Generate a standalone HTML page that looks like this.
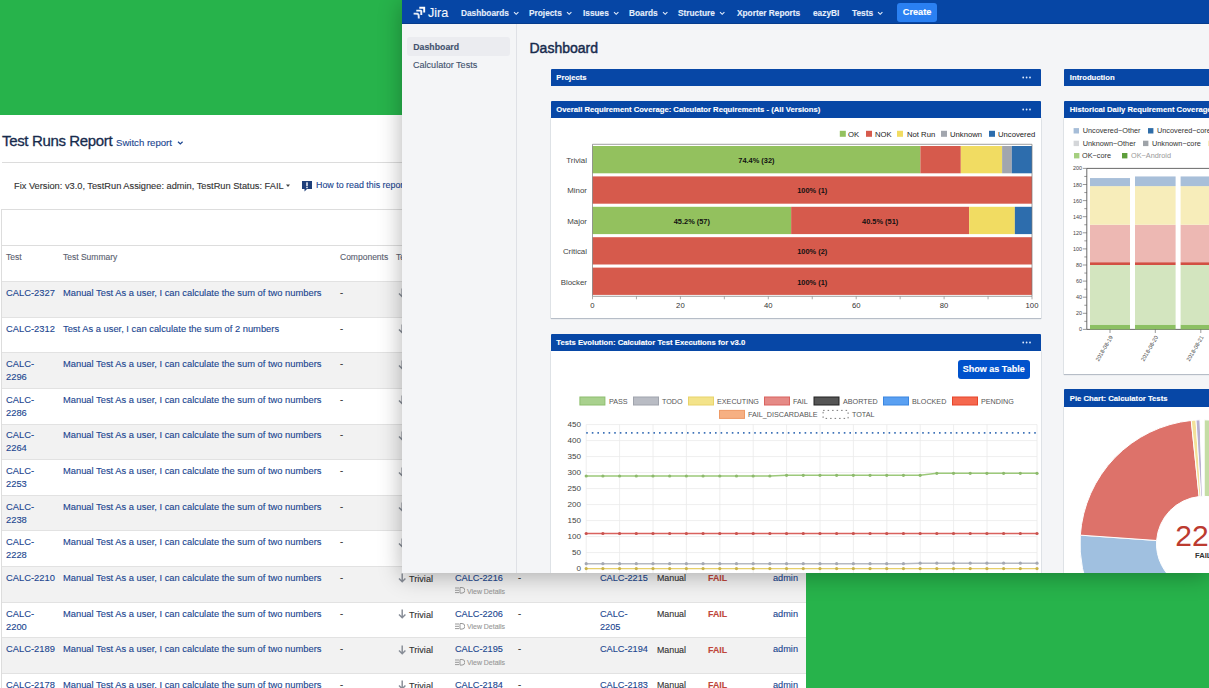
<!DOCTYPE html>
<html><head><meta charset="utf-8"><title>Jira Dashboard</title>
<style>
html,body{margin:0;padding:0;}
body{width:1209px;height:688px;overflow:hidden;position:relative;background:#27B34B;font-family:"Liberation Sans",sans-serif;}
.t{position:absolute;white-space:nowrap;line-height:1;-webkit-text-stroke:0.12px currentColor;}
.r{position:absolute;}
svg text{font-family:"Liberation Sans",sans-serif;}
</style></head><body>
<div class="r" style="left:0.00px;top:115.00px;width:806.00px;height:573.00px;background:#fff;"></div>
<div class="t" style="left:2.00px;top:132.60px;font-size:15px;color:#172B4D;-webkit-text-stroke:0.3px #172B4D;letter-spacing:-0.35px;">Test Runs Report</div>
<div class="t" style="left:116.00px;top:138.07px;font-size:9.6px;color:#1B4690;">Switch report</div>
<svg class="r" style="left:177px;top:140px" width="7" height="6"><polyline points="1,1.8 3.3,4 5.6,1.8" fill="none" stroke="#1B4690" stroke-width="1.2"/></svg>
<div class="r" style="left:2.00px;top:162.00px;width:804.00px;height:1.00px;background:#DCDCDC;"></div>
<div class="t" style="left:14.00px;top:182.17px;font-size:9.25px;color:#333;">Fix Version: v3.0, TestRun Assignee: admin, TestRun Status: FAIL</div>
<svg class="r" style="left:285px;top:184px" width="6" height="4"><polygon points="1,0.6 5,0.6 3,3" fill="#444"/></svg>
<svg class="r" style="left:301px;top:180px" width="12" height="12"><path d="M1,1 h10 v8 h-5 l-2.5,2.5 v-2.5 h-2.5 z" fill="#1F3F7A"/><rect x="5.3" y="2.3" width="1.4" height="4" fill="#fff"/><rect x="5.3" y="7" width="1.4" height="1.2" fill="#fff"/></svg>
<div class="t" style="left:316.00px;top:181.47px;font-size:8.9px;color:#1B4690;">How to read this report</div>
<div class="r" style="left:1.00px;top:209.00px;width:805.00px;height:1.00px;background:#DDDDDD;"></div>
<div class="r" style="left:1.00px;top:209.00px;width:1.00px;height:479.00px;background:#DDDDDD;"></div>
<div class="r" style="left:1.00px;top:244.80px;width:805.00px;height:1.00px;background:#DDDDDD;"></div>
<div class="t" style="left:6.00px;top:252.80px;font-size:8.5px;color:#5A6170;">Test</div>
<div class="t" style="left:63.00px;top:252.80px;font-size:8.5px;color:#5A6170;">Test Summary</div>
<div class="t" style="left:340.00px;top:252.80px;font-size:8.5px;color:#5A6170;">Components</div>
<div class="t" style="left:396.00px;top:252.80px;font-size:8.5px;color:#5A6170;">Test Type</div>
<div class="r" style="left:1.00px;top:280.50px;width:805.00px;height:1.00px;background:#DDDDDD;"></div>
<div class="r" style="left:2.00px;top:281.50px;width:804.00px;height:35.14px;background:#F2F2F2;"></div>
<div class="r" style="left:2.00px;top:281.00px;width:804.00px;height:1.00px;background:#E2E2E2;"></div>
<div class="t" style="left:6.00px;top:288.89px;font-size:9.35px;color:#1B4690;">CALC-2327</div>
<div class="t" style="left:63.00px;top:288.89px;font-size:9.35px;color:#1B4690;">Manual Test As a user, I can calculate the sum of two numbers</div>
<div class="t" style="left:340.00px;top:288.89px;font-size:9.35px;color:#333;">-</div>
<svg class="r" style="left:397.8px;top:288.30px" width="9" height="11"><path d="M4.2,0.5 V9 M1,5.6 L4.2,8.8 L7.4,5.6" fill="none" stroke="#868C96" stroke-width="1.45"/></svg>
<div class="t" style="left:409.00px;top:290.05px;font-size:9.15px;color:#333;">Trivial</div>
<div class="r" style="left:2.00px;top:317.14px;width:804.00px;height:35.14px;background:#FFFFFF;"></div>
<div class="r" style="left:2.00px;top:316.64px;width:804.00px;height:1.00px;background:#E2E2E2;"></div>
<div class="t" style="left:6.00px;top:324.53px;font-size:9.35px;color:#1B4690;">CALC-2312</div>
<div class="t" style="left:63.00px;top:324.53px;font-size:9.35px;color:#1B4690;">Test As a user, I can calculate the sum of 2 numbers</div>
<div class="t" style="left:340.00px;top:324.53px;font-size:9.35px;color:#333;">-</div>
<svg class="r" style="left:397.8px;top:323.94px" width="9" height="11"><path d="M4.2,0.5 V9 M1,5.6 L4.2,8.8 L7.4,5.6" fill="none" stroke="#868C96" stroke-width="1.45"/></svg>
<div class="t" style="left:409.00px;top:325.69px;font-size:9.15px;color:#333;">Trivial</div>
<div class="r" style="left:2.00px;top:352.78px;width:804.00px;height:35.14px;background:#F2F2F2;"></div>
<div class="r" style="left:2.00px;top:352.28px;width:804.00px;height:1.00px;background:#E2E2E2;"></div>
<div class="t" style="left:6.00px;top:360.17px;font-size:9.35px;color:#1B4690;">CALC-</div>
<div class="t" style="left:6.00px;top:373.17px;font-size:9.35px;color:#1B4690;">2296</div>
<div class="t" style="left:63.00px;top:360.17px;font-size:9.35px;color:#1B4690;">Manual Test As a user, I can calculate the sum of two numbers</div>
<div class="t" style="left:340.00px;top:360.17px;font-size:9.35px;color:#333;">-</div>
<svg class="r" style="left:397.8px;top:359.58px" width="9" height="11"><path d="M4.2,0.5 V9 M1,5.6 L4.2,8.8 L7.4,5.6" fill="none" stroke="#868C96" stroke-width="1.45"/></svg>
<div class="t" style="left:409.00px;top:361.33px;font-size:9.15px;color:#333;">Trivial</div>
<div class="r" style="left:2.00px;top:388.42px;width:804.00px;height:35.14px;background:#FFFFFF;"></div>
<div class="r" style="left:2.00px;top:387.92px;width:804.00px;height:1.00px;background:#E2E2E2;"></div>
<div class="t" style="left:6.00px;top:395.81px;font-size:9.35px;color:#1B4690;">CALC-</div>
<div class="t" style="left:6.00px;top:408.81px;font-size:9.35px;color:#1B4690;">2286</div>
<div class="t" style="left:63.00px;top:395.81px;font-size:9.35px;color:#1B4690;">Manual Test As a user, I can calculate the sum of two numbers</div>
<div class="t" style="left:340.00px;top:395.81px;font-size:9.35px;color:#333;">-</div>
<svg class="r" style="left:397.8px;top:395.22px" width="9" height="11"><path d="M4.2,0.5 V9 M1,5.6 L4.2,8.8 L7.4,5.6" fill="none" stroke="#868C96" stroke-width="1.45"/></svg>
<div class="t" style="left:409.00px;top:396.97px;font-size:9.15px;color:#333;">Trivial</div>
<div class="r" style="left:2.00px;top:424.06px;width:804.00px;height:35.14px;background:#F2F2F2;"></div>
<div class="r" style="left:2.00px;top:423.56px;width:804.00px;height:1.00px;background:#E2E2E2;"></div>
<div class="t" style="left:6.00px;top:431.45px;font-size:9.35px;color:#1B4690;">CALC-</div>
<div class="t" style="left:6.00px;top:444.45px;font-size:9.35px;color:#1B4690;">2264</div>
<div class="t" style="left:63.00px;top:431.45px;font-size:9.35px;color:#1B4690;">Manual Test As a user, I can calculate the sum of two numbers</div>
<div class="t" style="left:340.00px;top:431.45px;font-size:9.35px;color:#333;">-</div>
<svg class="r" style="left:397.8px;top:430.86px" width="9" height="11"><path d="M4.2,0.5 V9 M1,5.6 L4.2,8.8 L7.4,5.6" fill="none" stroke="#868C96" stroke-width="1.45"/></svg>
<div class="t" style="left:409.00px;top:432.61px;font-size:9.15px;color:#333;">Trivial</div>
<div class="r" style="left:2.00px;top:459.70px;width:804.00px;height:35.14px;background:#FFFFFF;"></div>
<div class="r" style="left:2.00px;top:459.20px;width:804.00px;height:1.00px;background:#E2E2E2;"></div>
<div class="t" style="left:6.00px;top:467.09px;font-size:9.35px;color:#1B4690;">CALC-</div>
<div class="t" style="left:6.00px;top:480.09px;font-size:9.35px;color:#1B4690;">2253</div>
<div class="t" style="left:63.00px;top:467.09px;font-size:9.35px;color:#1B4690;">Manual Test As a user, I can calculate the sum of two numbers</div>
<div class="t" style="left:340.00px;top:467.09px;font-size:9.35px;color:#333;">-</div>
<svg class="r" style="left:397.8px;top:466.50px" width="9" height="11"><path d="M4.2,0.5 V9 M1,5.6 L4.2,8.8 L7.4,5.6" fill="none" stroke="#868C96" stroke-width="1.45"/></svg>
<div class="t" style="left:409.00px;top:468.25px;font-size:9.15px;color:#333;">Trivial</div>
<div class="r" style="left:2.00px;top:495.34px;width:804.00px;height:35.14px;background:#F2F2F2;"></div>
<div class="r" style="left:2.00px;top:494.84px;width:804.00px;height:1.00px;background:#E2E2E2;"></div>
<div class="t" style="left:6.00px;top:502.73px;font-size:9.35px;color:#1B4690;">CALC-</div>
<div class="t" style="left:6.00px;top:515.73px;font-size:9.35px;color:#1B4690;">2238</div>
<div class="t" style="left:63.00px;top:502.73px;font-size:9.35px;color:#1B4690;">Manual Test As a user, I can calculate the sum of two numbers</div>
<div class="t" style="left:340.00px;top:502.73px;font-size:9.35px;color:#333;">-</div>
<svg class="r" style="left:397.8px;top:502.14px" width="9" height="11"><path d="M4.2,0.5 V9 M1,5.6 L4.2,8.8 L7.4,5.6" fill="none" stroke="#868C96" stroke-width="1.45"/></svg>
<div class="t" style="left:409.00px;top:503.89px;font-size:9.15px;color:#333;">Trivial</div>
<div class="r" style="left:2.00px;top:530.98px;width:804.00px;height:35.14px;background:#FFFFFF;"></div>
<div class="r" style="left:2.00px;top:530.48px;width:804.00px;height:1.00px;background:#E2E2E2;"></div>
<div class="t" style="left:6.00px;top:538.37px;font-size:9.35px;color:#1B4690;">CALC-</div>
<div class="t" style="left:6.00px;top:551.37px;font-size:9.35px;color:#1B4690;">2228</div>
<div class="t" style="left:63.00px;top:538.37px;font-size:9.35px;color:#1B4690;">Manual Test As a user, I can calculate the sum of two numbers</div>
<div class="t" style="left:340.00px;top:538.37px;font-size:9.35px;color:#333;">-</div>
<svg class="r" style="left:397.8px;top:537.78px" width="9" height="11"><path d="M4.2,0.5 V9 M1,5.6 L4.2,8.8 L7.4,5.6" fill="none" stroke="#868C96" stroke-width="1.45"/></svg>
<div class="t" style="left:409.00px;top:539.53px;font-size:9.15px;color:#333;">Trivial</div>
<div class="r" style="left:2.00px;top:566.62px;width:804.00px;height:35.14px;background:#F2F2F2;"></div>
<div class="r" style="left:2.00px;top:566.12px;width:804.00px;height:1.00px;background:#E2E2E2;"></div>
<div class="t" style="left:6.00px;top:574.01px;font-size:9.35px;color:#1B4690;">CALC-2210</div>
<div class="t" style="left:63.00px;top:574.01px;font-size:9.35px;color:#1B4690;">Manual Test As a user, I can calculate the sum of two numbers</div>
<div class="t" style="left:340.00px;top:574.01px;font-size:9.35px;color:#333;">-</div>
<svg class="r" style="left:397.8px;top:573.42px" width="9" height="11"><path d="M4.2,0.5 V9 M1,5.6 L4.2,8.8 L7.4,5.6" fill="none" stroke="#868C96" stroke-width="1.45"/></svg>
<div class="t" style="left:409.00px;top:575.17px;font-size:9.15px;color:#333;">Trivial</div>
<div class="t" style="left:455.00px;top:574.14px;font-size:9.19px;color:#1B4690;">CALC-2216</div>
<svg class="r" style="left:455px;top:587.42px" width="10" height="8"><g fill="#999"><rect x="0" y="0.5" width="4" height="1"/><rect x="0" y="2.8" width="4" height="1"/><rect x="0" y="5.1" width="4" height="1"/><path d="M5,0.5 h2 a2.6,2.6 0 0 1 0,5.6 h-2 z" fill="none" stroke="#999" stroke-width="1"/></g></svg>
<div class="t" style="left:467.00px;top:588.74px;font-size:6.95px;color:#999;">View Details</div>
<div class="t" style="left:518.00px;top:574.01px;font-size:9.35px;color:#333;">-</div>
<div class="t" style="left:600.00px;top:574.14px;font-size:9.19px;color:#1B4690;">CALC-2215</div>
<div class="t" style="left:657.00px;top:574.43px;font-size:8.85px;color:#333;">Manual</div>
<div class="t" style="left:708.00px;top:574.47px;font-size:8.8px;color:#BF463B;font-weight:bold;">FAIL</div>
<div class="t" style="left:773.00px;top:574.15px;font-size:9.18px;color:#1B4690;">admin</div>
<div class="r" style="left:2.00px;top:602.26px;width:804.00px;height:35.14px;background:#FFFFFF;"></div>
<div class="r" style="left:2.00px;top:601.76px;width:804.00px;height:1.00px;background:#E2E2E2;"></div>
<div class="t" style="left:6.00px;top:609.65px;font-size:9.35px;color:#1B4690;">CALC-</div>
<div class="t" style="left:6.00px;top:622.65px;font-size:9.35px;color:#1B4690;">2200</div>
<div class="t" style="left:63.00px;top:609.65px;font-size:9.35px;color:#1B4690;">Manual Test As a user, I can calculate the sum of two numbers</div>
<div class="t" style="left:340.00px;top:609.65px;font-size:9.35px;color:#333;">-</div>
<svg class="r" style="left:397.8px;top:609.06px" width="9" height="11"><path d="M4.2,0.5 V9 M1,5.6 L4.2,8.8 L7.4,5.6" fill="none" stroke="#868C96" stroke-width="1.45"/></svg>
<div class="t" style="left:409.00px;top:610.81px;font-size:9.15px;color:#333;">Trivial</div>
<div class="t" style="left:455.00px;top:609.78px;font-size:9.19px;color:#1B4690;">CALC-2206</div>
<svg class="r" style="left:455px;top:623.06px" width="10" height="8"><g fill="#999"><rect x="0" y="0.5" width="4" height="1"/><rect x="0" y="2.8" width="4" height="1"/><rect x="0" y="5.1" width="4" height="1"/><path d="M5,0.5 h2 a2.6,2.6 0 0 1 0,5.6 h-2 z" fill="none" stroke="#999" stroke-width="1"/></g></svg>
<div class="t" style="left:467.00px;top:624.38px;font-size:6.95px;color:#999;">View Details</div>
<div class="t" style="left:518.00px;top:609.65px;font-size:9.35px;color:#333;">-</div>
<div class="t" style="left:600.00px;top:609.78px;font-size:9.19px;color:#1B4690;">CALC-</div>
<div class="t" style="left:600.00px;top:622.78px;font-size:9.19px;color:#1B4690;">2205</div>
<div class="t" style="left:657.00px;top:610.07px;font-size:8.85px;color:#333;">Manual</div>
<div class="t" style="left:708.00px;top:610.11px;font-size:8.8px;color:#BF463B;font-weight:bold;">FAIL</div>
<div class="t" style="left:773.00px;top:609.79px;font-size:9.18px;color:#1B4690;">admin</div>
<div class="r" style="left:2.00px;top:637.90px;width:804.00px;height:35.14px;background:#F2F2F2;"></div>
<div class="r" style="left:2.00px;top:637.40px;width:804.00px;height:1.00px;background:#E2E2E2;"></div>
<div class="t" style="left:6.00px;top:645.29px;font-size:9.35px;color:#1B4690;">CALC-2189</div>
<div class="t" style="left:63.00px;top:645.29px;font-size:9.35px;color:#1B4690;">Manual Test As a user, I can calculate the sum of two numbers</div>
<div class="t" style="left:340.00px;top:645.29px;font-size:9.35px;color:#333;">-</div>
<svg class="r" style="left:397.8px;top:644.70px" width="9" height="11"><path d="M4.2,0.5 V9 M1,5.6 L4.2,8.8 L7.4,5.6" fill="none" stroke="#868C96" stroke-width="1.45"/></svg>
<div class="t" style="left:409.00px;top:646.45px;font-size:9.15px;color:#333;">Trivial</div>
<div class="t" style="left:455.00px;top:645.42px;font-size:9.19px;color:#1B4690;">CALC-2195</div>
<svg class="r" style="left:455px;top:658.70px" width="10" height="8"><g fill="#999"><rect x="0" y="0.5" width="4" height="1"/><rect x="0" y="2.8" width="4" height="1"/><rect x="0" y="5.1" width="4" height="1"/><path d="M5,0.5 h2 a2.6,2.6 0 0 1 0,5.6 h-2 z" fill="none" stroke="#999" stroke-width="1"/></g></svg>
<div class="t" style="left:467.00px;top:660.02px;font-size:6.95px;color:#999;">View Details</div>
<div class="t" style="left:518.00px;top:645.29px;font-size:9.35px;color:#333;">-</div>
<div class="t" style="left:600.00px;top:645.42px;font-size:9.19px;color:#1B4690;">CALC-2194</div>
<div class="t" style="left:657.00px;top:645.71px;font-size:8.85px;color:#333;">Manual</div>
<div class="t" style="left:708.00px;top:645.75px;font-size:8.8px;color:#BF463B;font-weight:bold;">FAIL</div>
<div class="t" style="left:773.00px;top:645.43px;font-size:9.18px;color:#1B4690;">admin</div>
<div class="r" style="left:2.00px;top:673.54px;width:804.00px;height:35.14px;background:#FFFFFF;"></div>
<div class="r" style="left:2.00px;top:673.04px;width:804.00px;height:1.00px;background:#E2E2E2;"></div>
<div class="t" style="left:6.00px;top:680.93px;font-size:9.35px;color:#1B4690;">CALC-2178</div>
<div class="t" style="left:63.00px;top:680.93px;font-size:9.35px;color:#1B4690;">Manual Test As a user, I can calculate the sum of two numbers</div>
<div class="t" style="left:340.00px;top:680.93px;font-size:9.35px;color:#333;">-</div>
<svg class="r" style="left:397.8px;top:680.34px" width="9" height="11"><path d="M4.2,0.5 V9 M1,5.6 L4.2,8.8 L7.4,5.6" fill="none" stroke="#868C96" stroke-width="1.45"/></svg>
<div class="t" style="left:409.00px;top:682.09px;font-size:9.15px;color:#333;">Trivial</div>
<div class="t" style="left:455.00px;top:681.06px;font-size:9.19px;color:#1B4690;">CALC-2184</div>
<svg class="r" style="left:455px;top:694.34px" width="10" height="8"><g fill="#999"><rect x="0" y="0.5" width="4" height="1"/><rect x="0" y="2.8" width="4" height="1"/><rect x="0" y="5.1" width="4" height="1"/><path d="M5,0.5 h2 a2.6,2.6 0 0 1 0,5.6 h-2 z" fill="none" stroke="#999" stroke-width="1"/></g></svg>
<div class="t" style="left:467.00px;top:695.66px;font-size:6.95px;color:#999;">View Details</div>
<div class="t" style="left:518.00px;top:680.93px;font-size:9.35px;color:#333;">-</div>
<div class="t" style="left:600.00px;top:681.06px;font-size:9.19px;color:#1B4690;">CALC-2183</div>
<div class="t" style="left:657.00px;top:681.35px;font-size:8.85px;color:#333;">Manual</div>
<div class="t" style="left:708.00px;top:681.39px;font-size:8.8px;color:#BF463B;font-weight:bold;">FAIL</div>
<div class="t" style="left:773.00px;top:681.07px;font-size:9.18px;color:#1B4690;">admin</div>
<div class="r" style="left:806px;top:573px;width:403px;height:115px;background:#27B34B"></div>
<div class="r" style="left:402px;top:0;width:807px;height:573px;background:#F4F5F7;box-shadow:0 3px 22px rgba(0,0,0,0.3);overflow:hidden"><div class="r" style="left:-402px;top:0;width:1209px;height:573px;">
<div class="r" style="left:402.00px;top:0.00px;width:807.00px;height:24.40px;background:#0646A5;box-shadow:inset 0 -1px 0 #053B8C;"></div>
<svg class="r" style="left:408px;top:2px" width="20" height="20" viewBox="0 0 20 20"><g fill="none" stroke="#fff" stroke-width="1.9" stroke-linecap="butt" stroke-linejoin="miter"><path d="M11.3,5.7 H16.2 V10.6"/><path d="M8.3,8.6 H12.7 L13.3,9.2 V12.9" opacity="0.95"/><path d="M5.6,11.6 L9.6,11.8 L10.6,12.8 L10.8,16.5" opacity="0.9"/></g></svg>
<div class="t" style="left:428.00px;top:7.13px;font-size:12.6px;color:#F4F7FD;">Jira</div>
<div class="t" style="left:461.00px;top:8.67px;font-size:8.3px;color:#E4EDFB;font-weight:bold;">Dashboards</div>
<svg class="r" style="left:513.26px;top:10.6px" width="7" height="5"><polyline points="1,1.2 3.2,3.3 5.4,1.2" fill="none" stroke="#E4EDFB" stroke-width="1.15"/></svg>
<div class="t" style="left:529.00px;top:8.67px;font-size:8.3px;color:#E4EDFB;font-weight:bold;">Projects</div>
<svg class="r" style="left:566.05px;top:10.6px" width="7" height="5"><polyline points="1,1.2 3.2,3.3 5.4,1.2" fill="none" stroke="#E4EDFB" stroke-width="1.15"/></svg>
<div class="t" style="left:583.00px;top:8.67px;font-size:8.3px;color:#E4EDFB;font-weight:bold;">Issues</div>
<svg class="r" style="left:613.14px;top:10.6px" width="7" height="5"><polyline points="1,1.2 3.2,3.3 5.4,1.2" fill="none" stroke="#E4EDFB" stroke-width="1.15"/></svg>
<div class="t" style="left:629.00px;top:8.67px;font-size:8.3px;color:#E4EDFB;font-weight:bold;">Boards</div>
<svg class="r" style="left:661.89px;top:10.6px" width="7" height="5"><polyline points="1,1.2 3.2,3.3 5.4,1.2" fill="none" stroke="#E4EDFB" stroke-width="1.15"/></svg>
<div class="t" style="left:678.00px;top:8.67px;font-size:8.3px;color:#E4EDFB;font-weight:bold;">Structure</div>
<svg class="r" style="left:719.19px;top:10.6px" width="7" height="5"><polyline points="1,1.2 3.2,3.3 5.4,1.2" fill="none" stroke="#E4EDFB" stroke-width="1.15"/></svg>
<div class="t" style="left:737.00px;top:8.67px;font-size:8.3px;color:#E4EDFB;font-weight:bold;">Xporter Reports</div>
<div class="t" style="left:813.00px;top:8.67px;font-size:8.3px;color:#E4EDFB;font-weight:bold;">eazyBI</div>
<div class="t" style="left:852.00px;top:8.67px;font-size:8.3px;color:#E4EDFB;font-weight:bold;">Tests</div>
<svg class="r" style="left:877.36px;top:10.6px" width="7" height="5"><polyline points="1,1.2 3.2,3.3 5.4,1.2" fill="none" stroke="#E4EDFB" stroke-width="1.15"/></svg>
<div class="r" style="left:897.00px;top:3.00px;width:40.20px;height:18.60px;background:#2A80F2;border-radius:3px;"></div>
<div class="t" style="left:917.10px;top:7.91px;font-size:9.2px;color:#fff;font-weight:bold;transform:translateX(-50%);">Create</div>
<div class="r" style="left:516.00px;top:24.00px;width:1.00px;height:549.00px;background:#DFE1E6;"></div>
<div class="r" style="left:407.00px;top:37.00px;width:103.00px;height:18.50px;background:#EBECF0;border-radius:3px;"></div>
<div class="t" style="left:413.30px;top:42.99px;font-size:8.75px;color:#42526E;font-weight:bold;">Dashboard</div>
<div class="t" style="left:413.00px;top:61.14px;font-size:9.05px;color:#42526E;">Calculator Tests</div>
<div class="t" style="left:529.50px;top:40.75px;font-size:14px;color:#172B4D;-webkit-text-stroke:0.45px #172B4D;">Dashboard</div>
<div class="r" style="left:550.50px;top:68.60px;width:490.50px;height:17.40px;background:#0747A6;border-radius:1px 1px 0 0;"></div>
<div class="t" style="left:556.30px;top:73.98px;font-size:7.7px;color:#fff;font-weight:bold;">Projects</div>
<svg class="r" style="left:1022.00px;top:75.60px" width="10" height="3"><g fill="#DEEBFF"><circle cx="1.2" cy="1.5" r="0.9"/><circle cx="4.6" cy="1.5" r="0.9"/><circle cx="8" cy="1.5" r="0.9"/></g></svg>
<div class="r" style="left:550.50px;top:117.70px;width:490.50px;height:200.80px;background:#fff;box-shadow:0 1px 1px rgba(9,30,66,0.22), 0 0 0 1px rgba(9,30,66,0.05);"></div>
<div class="r" style="left:550.50px;top:101.00px;width:490.50px;height:16.70px;background:#0747A6;border-radius:1px 1px 0 0;"></div>
<div class="t" style="left:556.30px;top:106.38px;font-size:7.7px;color:#fff;font-weight:bold;">Overall Requirement Coverage: Calculator Requirements - (All Versions)</div>
<svg class="r" style="left:1022.00px;top:108.00px" width="10" height="3"><g fill="#DEEBFF"><circle cx="1.2" cy="1.5" r="0.9"/><circle cx="4.6" cy="1.5" r="0.9"/><circle cx="8" cy="1.5" r="0.9"/></g></svg>
<div class="r" style="left:550.50px;top:350.80px;width:490.50px;height:249.20px;background:#fff;box-shadow:0 1px 1px rgba(9,30,66,0.22), 0 0 0 1px rgba(9,30,66,0.05);"></div>
<div class="r" style="left:550.50px;top:334.00px;width:490.50px;height:16.80px;background:#0747A6;border-radius:1px 1px 0 0;"></div>
<div class="t" style="left:556.30px;top:339.38px;font-size:7.7px;color:#fff;font-weight:bold;">Tests Evolution: Calculator Test Executions for v3.0</div>
<svg class="r" style="left:1022.00px;top:341.00px" width="10" height="3"><g fill="#DEEBFF"><circle cx="1.2" cy="1.5" r="0.9"/><circle cx="4.6" cy="1.5" r="0.9"/><circle cx="8" cy="1.5" r="0.9"/></g></svg>
<div class="r" style="left:957.50px;top:360.40px;width:72.50px;height:18.30px;background:#0052CC;border-radius:3px;"></div>
<div class="t" style="left:993.75px;top:365.38px;font-size:9.0px;color:#fff;font-weight:bold;transform:translateX(-50%);">Show as Table</div>
<div class="r" style="left:1064.00px;top:68.60px;width:166.00px;height:17.40px;background:#0747A6;border-radius:1px 1px 0 0;"></div>
<div class="t" style="left:1069.80px;top:73.98px;font-size:7.7px;color:#fff;font-weight:bold;">Introduction</div>
<div class="r" style="left:1064.00px;top:117.70px;width:166.00px;height:256.60px;background:#fff;box-shadow:0 1px 1px rgba(9,30,66,0.22), 0 0 0 1px rgba(9,30,66,0.05);"></div>
<div class="r" style="left:1064.00px;top:100.70px;width:166.00px;height:17.00px;background:#0747A6;border-radius:1px 1px 0 0;"></div>
<div class="t" style="left:1069.80px;top:106.08px;font-size:7.7px;color:#fff;font-weight:bold;">Historical Daily Requirement Coverage</div>
<div class="r" style="left:1064.00px;top:406.60px;width:166.00px;height:193.40px;background:#fff;box-shadow:0 1px 1px rgba(9,30,66,0.22), 0 0 0 1px rgba(9,30,66,0.05);"></div>
<div class="r" style="left:1064.00px;top:389.20px;width:166.00px;height:17.40px;background:#0747A6;border-radius:1px 1px 0 0;"></div>
<div class="t" style="left:1069.80px;top:394.58px;font-size:7.7px;color:#fff;font-weight:bold;">Pie Chart: Calculator Tests</div>
<svg class="r" style="left:0;top:0" width="1209" height="573"><rect x="839.8" y="130.8" width="6" height="6" fill="#93C15E"/><text x="848" y="136.5" font-size="7.7" fill="#222">OK</text><rect x="866" y="130.8" width="6" height="6" fill="#D65A4C"/><text x="875" y="136.5" font-size="7.7" fill="#222">NOK</text><rect x="897" y="130.8" width="6" height="6" fill="#F1DC62"/><text x="907" y="136.5" font-size="7.7" fill="#222">Not Run</text><rect x="941" y="130.8" width="6" height="6" fill="#A2A6AE"/><text x="950" y="136.5" font-size="7.7" fill="#222">Unknown</text><rect x="989" y="130.8" width="6" height="6" fill="#2D6DAD"/><text x="998" y="136.5" font-size="7.7" fill="#222">Uncovered</text><rect x="592.50" y="146.00" width="327.87" height="27.30" fill="#93C15E"/><text x="756.43" y="163.05" font-size="7.4" font-weight="bold" fill="#111" text-anchor="middle">74.4% (32)</text><rect x="920.37" y="146.00" width="40.43" height="27.30" fill="#D65A4C"/><rect x="960.80" y="146.00" width="41.31" height="27.30" fill="#F1DC62"/><rect x="1002.11" y="146.00" width="9.67" height="27.30" fill="#A2A6AE"/><rect x="1011.78" y="146.00" width="20.22" height="27.30" fill="#2D6DAD"/><text x="587" y="163.05" font-size="7.9" fill="#444" text-anchor="end">Trivial</text><rect x="592.50" y="176.40" width="439.50" height="27.30" fill="#D65A4C"/><text x="812.25" y="193.45" font-size="7.4" font-weight="bold" fill="#111" text-anchor="middle">100% (1)</text><text x="587" y="193.45" font-size="7.9" fill="#444" text-anchor="end">Minor</text><rect x="592.50" y="206.80" width="198.65" height="27.30" fill="#93C15E"/><text x="691.83" y="223.85" font-size="7.4" font-weight="bold" fill="#111" text-anchor="middle">45.2% (57)</text><rect x="791.15" y="206.80" width="178.00" height="27.30" fill="#D65A4C"/><text x="880.15" y="223.85" font-size="7.4" font-weight="bold" fill="#111" text-anchor="middle">40.5% (51)</text><rect x="969.15" y="206.80" width="45.71" height="27.30" fill="#F1DC62"/><rect x="1014.86" y="206.80" width="17.14" height="27.30" fill="#2D6DAD"/><text x="587" y="223.85" font-size="7.9" fill="#444" text-anchor="end">Major</text><rect x="592.50" y="237.20" width="439.50" height="27.30" fill="#D65A4C"/><text x="812.25" y="254.25" font-size="7.4" font-weight="bold" fill="#111" text-anchor="middle">100% (2)</text><text x="587" y="254.25" font-size="7.9" fill="#444" text-anchor="end">Critical</text><rect x="592.50" y="267.60" width="439.50" height="27.30" fill="#D65A4C"/><text x="812.25" y="284.65" font-size="7.4" font-weight="bold" fill="#111" text-anchor="middle">100% (1)</text><text x="587" y="284.65" font-size="7.9" fill="#444" text-anchor="end">Blocker</text><path d="M592.5,144.3 H1032 V296.3 H592.5 Z" fill="none" stroke="#777" stroke-width="0.7"/><line x1="592.50" y1="296.3" x2="592.50" y2="299.3" stroke="#888" stroke-width="0.7"/><text x="592.50" y="307.6" font-size="7.7" fill="#333" text-anchor="middle">0</text><line x1="636.45" y1="296.3" x2="636.45" y2="299.3" stroke="#888" stroke-width="0.7"/><line x1="680.40" y1="296.3" x2="680.40" y2="299.3" stroke="#888" stroke-width="0.7"/><text x="680.40" y="307.6" font-size="7.7" fill="#333" text-anchor="middle">20</text><line x1="724.35" y1="296.3" x2="724.35" y2="299.3" stroke="#888" stroke-width="0.7"/><line x1="768.30" y1="296.3" x2="768.30" y2="299.3" stroke="#888" stroke-width="0.7"/><text x="768.30" y="307.6" font-size="7.7" fill="#333" text-anchor="middle">40</text><line x1="812.25" y1="296.3" x2="812.25" y2="299.3" stroke="#888" stroke-width="0.7"/><line x1="856.20" y1="296.3" x2="856.20" y2="299.3" stroke="#888" stroke-width="0.7"/><text x="856.20" y="307.6" font-size="7.7" fill="#333" text-anchor="middle">60</text><line x1="900.15" y1="296.3" x2="900.15" y2="299.3" stroke="#888" stroke-width="0.7"/><line x1="944.10" y1="296.3" x2="944.10" y2="299.3" stroke="#888" stroke-width="0.7"/><text x="944.10" y="307.6" font-size="7.7" fill="#333" text-anchor="middle">80</text><line x1="988.05" y1="296.3" x2="988.05" y2="299.3" stroke="#888" stroke-width="0.7"/><line x1="1032.00" y1="296.3" x2="1032.00" y2="299.3" stroke="#888" stroke-width="0.7"/><text x="1032.00" y="307.6" font-size="7.7" fill="#333" text-anchor="middle">100</text><rect x="579.9" y="397" width="25" height="8" fill="#A9D18E" stroke="#8DBE6E" stroke-width="1"/><text x="609" y="403.6" font-size="7.2" fill="#555">PASS</text><rect x="633.5" y="397" width="25" height="8" fill="#B9BCC4" stroke="#A0A4AD" stroke-width="1"/><text x="662" y="403.6" font-size="7.2" fill="#555">TODO</text><rect x="688.5" y="397" width="25" height="8" fill="#F3E38A" stroke="#E8D36A" stroke-width="1"/><text x="717" y="403.6" font-size="7.2" fill="#555">EXECUTING</text><rect x="764.5" y="397" width="25" height="8" fill="#E58A86" stroke="#D9625E" stroke-width="1"/><text x="793" y="403.6" font-size="7.2" fill="#555">FAIL</text><rect x="814.0" y="397" width="25" height="8" fill="#555" stroke="#222" stroke-width="1"/><text x="843" y="403.6" font-size="7.2" fill="#555">ABORTED</text><rect x="883.5" y="397" width="25" height="8" fill="#5AA0F2" stroke="#3B86E0" stroke-width="1"/><text x="912" y="403.6" font-size="7.2" fill="#555">BLOCKED</text><rect x="952.5" y="397" width="25" height="8" fill="#F5684E" stroke="#E6452A" stroke-width="1"/><text x="981" y="403.6" font-size="7.2" fill="#555">PENDING</text><rect x="719.5" y="410.4" width="25" height="8" fill="#F6B083" stroke="#EE9A66" stroke-width="1"/><text x="748" y="417.0" font-size="7.2" fill="#555">FAIL_DISCARDABLE</text><rect x="823.1" y="410.4" width="25" height="8" fill="none" stroke="#777" stroke-width="1" stroke-dasharray="1.5,3"/><text x="852" y="417" font-size="7.2" fill="#555">TOTAL</text><line x1="586.2" y1="568.60" x2="1037" y2="568.60" stroke="#EAEAEA" stroke-width="0.8"/><text x="581" y="571.40" font-size="8.1" fill="#444" text-anchor="end">0</text><line x1="586.2" y1="552.60" x2="1037" y2="552.60" stroke="#EAEAEA" stroke-width="0.8"/><text x="581" y="555.40" font-size="8.1" fill="#444" text-anchor="end">50</text><line x1="586.2" y1="536.60" x2="1037" y2="536.60" stroke="#EAEAEA" stroke-width="0.8"/><text x="581" y="539.40" font-size="8.1" fill="#444" text-anchor="end">100</text><line x1="586.2" y1="520.60" x2="1037" y2="520.60" stroke="#EAEAEA" stroke-width="0.8"/><text x="581" y="523.40" font-size="8.1" fill="#444" text-anchor="end">150</text><line x1="586.2" y1="504.60" x2="1037" y2="504.60" stroke="#EAEAEA" stroke-width="0.8"/><text x="581" y="507.40" font-size="8.1" fill="#444" text-anchor="end">200</text><line x1="586.2" y1="488.60" x2="1037" y2="488.60" stroke="#EAEAEA" stroke-width="0.8"/><text x="581" y="491.40" font-size="8.1" fill="#444" text-anchor="end">250</text><line x1="586.2" y1="472.60" x2="1037" y2="472.60" stroke="#EAEAEA" stroke-width="0.8"/><text x="581" y="475.40" font-size="8.1" fill="#444" text-anchor="end">300</text><line x1="586.2" y1="456.60" x2="1037" y2="456.60" stroke="#EAEAEA" stroke-width="0.8"/><text x="581" y="459.40" font-size="8.1" fill="#444" text-anchor="end">350</text><line x1="586.2" y1="440.60" x2="1037" y2="440.60" stroke="#EAEAEA" stroke-width="0.8"/><text x="581" y="443.40" font-size="8.1" fill="#444" text-anchor="end">400</text><line x1="586.2" y1="424.60" x2="1037" y2="424.60" stroke="#EAEAEA" stroke-width="0.8"/><text x="581" y="427.40" font-size="8.1" fill="#444" text-anchor="end">450</text><line x1="586.20" y1="424.6" x2="586.20" y2="573" stroke="#EAEAEA" stroke-width="0.8"/><line x1="619.60" y1="424.6" x2="619.60" y2="573" stroke="#EAEAEA" stroke-width="0.8"/><line x1="653.00" y1="424.6" x2="653.00" y2="573" stroke="#EAEAEA" stroke-width="0.8"/><line x1="686.40" y1="424.6" x2="686.40" y2="573" stroke="#EAEAEA" stroke-width="0.8"/><line x1="719.80" y1="424.6" x2="719.80" y2="573" stroke="#EAEAEA" stroke-width="0.8"/><line x1="753.20" y1="424.6" x2="753.20" y2="573" stroke="#EAEAEA" stroke-width="0.8"/><line x1="786.60" y1="424.6" x2="786.60" y2="573" stroke="#EAEAEA" stroke-width="0.8"/><line x1="820.00" y1="424.6" x2="820.00" y2="573" stroke="#EAEAEA" stroke-width="0.8"/><line x1="853.40" y1="424.6" x2="853.40" y2="573" stroke="#EAEAEA" stroke-width="0.8"/><line x1="886.80" y1="424.6" x2="886.80" y2="573" stroke="#EAEAEA" stroke-width="0.8"/><line x1="920.20" y1="424.6" x2="920.20" y2="573" stroke="#EAEAEA" stroke-width="0.8"/><line x1="953.60" y1="424.6" x2="953.60" y2="573" stroke="#EAEAEA" stroke-width="0.8"/><line x1="987.00" y1="424.6" x2="987.00" y2="573" stroke="#EAEAEA" stroke-width="0.8"/><line x1="1037" y1="424.6" x2="1037" y2="573" stroke="#EAEAEA" stroke-width="0.8"/><polyline points="586.20,476.00 602.90,476.00 619.59,476.00 636.29,476.00 652.99,476.00 669.68,476.00 686.38,476.00 703.07,476.00 719.77,476.00 736.47,476.00 753.16,476.00 769.86,476.00 786.56,475.30 803.25,475.30 819.95,475.30 836.64,475.30 853.34,475.30 870.04,475.30 886.73,475.30 903.43,475.30 920.13,475.30 936.82,473.30 953.52,473.30 970.21,473.30 986.91,473.30 1003.61,473.30 1020.30,473.30 1037.00,473.30" fill="none" stroke="#9CC97A" stroke-width="1.4"/><circle cx="586.20" cy="476.00" r="1.6" fill="#8DBA6C"/><circle cx="602.90" cy="476.00" r="1.6" fill="#8DBA6C"/><circle cx="619.59" cy="476.00" r="1.6" fill="#8DBA6C"/><circle cx="636.29" cy="476.00" r="1.6" fill="#8DBA6C"/><circle cx="652.99" cy="476.00" r="1.6" fill="#8DBA6C"/><circle cx="669.68" cy="476.00" r="1.6" fill="#8DBA6C"/><circle cx="686.38" cy="476.00" r="1.6" fill="#8DBA6C"/><circle cx="703.07" cy="476.00" r="1.6" fill="#8DBA6C"/><circle cx="719.77" cy="476.00" r="1.6" fill="#8DBA6C"/><circle cx="736.47" cy="476.00" r="1.6" fill="#8DBA6C"/><circle cx="753.16" cy="476.00" r="1.6" fill="#8DBA6C"/><circle cx="769.86" cy="476.00" r="1.6" fill="#8DBA6C"/><circle cx="786.56" cy="475.30" r="1.6" fill="#8DBA6C"/><circle cx="803.25" cy="475.30" r="1.6" fill="#8DBA6C"/><circle cx="819.95" cy="475.30" r="1.6" fill="#8DBA6C"/><circle cx="836.64" cy="475.30" r="1.6" fill="#8DBA6C"/><circle cx="853.34" cy="475.30" r="1.6" fill="#8DBA6C"/><circle cx="870.04" cy="475.30" r="1.6" fill="#8DBA6C"/><circle cx="886.73" cy="475.30" r="1.6" fill="#8DBA6C"/><circle cx="903.43" cy="475.30" r="1.6" fill="#8DBA6C"/><circle cx="920.13" cy="475.30" r="1.6" fill="#8DBA6C"/><circle cx="936.82" cy="473.30" r="1.6" fill="#8DBA6C"/><circle cx="953.52" cy="473.30" r="1.6" fill="#8DBA6C"/><circle cx="970.21" cy="473.30" r="1.6" fill="#8DBA6C"/><circle cx="986.91" cy="473.30" r="1.6" fill="#8DBA6C"/><circle cx="1003.61" cy="473.30" r="1.6" fill="#8DBA6C"/><circle cx="1020.30" cy="473.30" r="1.6" fill="#8DBA6C"/><circle cx="1037.00" cy="473.30" r="1.6" fill="#8DBA6C"/><polyline points="586.20,533.50 602.90,533.50 619.59,533.50 636.29,533.50 652.99,533.50 669.68,533.50 686.38,533.50 703.07,533.50 719.77,533.50 736.47,533.50 753.16,533.50 769.86,533.50 786.56,533.50 803.25,533.50 819.95,533.50 836.64,533.50 853.34,533.50 870.04,533.50 886.73,533.50 903.43,533.50 920.13,533.50 936.82,533.50 953.52,533.50 970.21,533.50 986.91,533.50 1003.61,533.50 1020.30,533.50 1037.00,533.50" fill="none" stroke="#D9625E" stroke-width="1.4"/><circle cx="586.20" cy="533.50" r="1.6" fill="#C9524E"/><circle cx="602.90" cy="533.50" r="1.6" fill="#C9524E"/><circle cx="619.59" cy="533.50" r="1.6" fill="#C9524E"/><circle cx="636.29" cy="533.50" r="1.6" fill="#C9524E"/><circle cx="652.99" cy="533.50" r="1.6" fill="#C9524E"/><circle cx="669.68" cy="533.50" r="1.6" fill="#C9524E"/><circle cx="686.38" cy="533.50" r="1.6" fill="#C9524E"/><circle cx="703.07" cy="533.50" r="1.6" fill="#C9524E"/><circle cx="719.77" cy="533.50" r="1.6" fill="#C9524E"/><circle cx="736.47" cy="533.50" r="1.6" fill="#C9524E"/><circle cx="753.16" cy="533.50" r="1.6" fill="#C9524E"/><circle cx="769.86" cy="533.50" r="1.6" fill="#C9524E"/><circle cx="786.56" cy="533.50" r="1.6" fill="#C9524E"/><circle cx="803.25" cy="533.50" r="1.6" fill="#C9524E"/><circle cx="819.95" cy="533.50" r="1.6" fill="#C9524E"/><circle cx="836.64" cy="533.50" r="1.6" fill="#C9524E"/><circle cx="853.34" cy="533.50" r="1.6" fill="#C9524E"/><circle cx="870.04" cy="533.50" r="1.6" fill="#C9524E"/><circle cx="886.73" cy="533.50" r="1.6" fill="#C9524E"/><circle cx="903.43" cy="533.50" r="1.6" fill="#C9524E"/><circle cx="920.13" cy="533.50" r="1.6" fill="#C9524E"/><circle cx="936.82" cy="533.50" r="1.6" fill="#C9524E"/><circle cx="953.52" cy="533.50" r="1.6" fill="#C9524E"/><circle cx="970.21" cy="533.50" r="1.6" fill="#C9524E"/><circle cx="986.91" cy="533.50" r="1.6" fill="#C9524E"/><circle cx="1003.61" cy="533.50" r="1.6" fill="#C9524E"/><circle cx="1020.30" cy="533.50" r="1.6" fill="#C9524E"/><circle cx="1037.00" cy="533.50" r="1.6" fill="#C9524E"/><polyline points="586.20,563.70 602.90,563.70 619.59,563.70 636.29,563.70 652.99,563.70 669.68,563.70 686.38,563.70 703.07,563.70 719.77,563.70 736.47,563.70 753.16,563.70 769.86,563.70 786.56,563.70 803.25,563.70 819.95,563.70 836.64,563.70 853.34,563.70 870.04,563.70 886.73,563.70 903.43,563.70 920.13,563.20 936.82,563.20 953.52,563.20 970.21,563.20 986.91,563.20 1003.61,563.20 1020.30,563.20 1037.00,563.20" fill="none" stroke="#B6B9C2" stroke-width="1.4"/><circle cx="586.20" cy="563.70" r="1.6" fill="#A4A8B2"/><circle cx="602.90" cy="563.70" r="1.6" fill="#A4A8B2"/><circle cx="619.59" cy="563.70" r="1.6" fill="#A4A8B2"/><circle cx="636.29" cy="563.70" r="1.6" fill="#A4A8B2"/><circle cx="652.99" cy="563.70" r="1.6" fill="#A4A8B2"/><circle cx="669.68" cy="563.70" r="1.6" fill="#A4A8B2"/><circle cx="686.38" cy="563.70" r="1.6" fill="#A4A8B2"/><circle cx="703.07" cy="563.70" r="1.6" fill="#A4A8B2"/><circle cx="719.77" cy="563.70" r="1.6" fill="#A4A8B2"/><circle cx="736.47" cy="563.70" r="1.6" fill="#A4A8B2"/><circle cx="753.16" cy="563.70" r="1.6" fill="#A4A8B2"/><circle cx="769.86" cy="563.70" r="1.6" fill="#A4A8B2"/><circle cx="786.56" cy="563.70" r="1.6" fill="#A4A8B2"/><circle cx="803.25" cy="563.70" r="1.6" fill="#A4A8B2"/><circle cx="819.95" cy="563.70" r="1.6" fill="#A4A8B2"/><circle cx="836.64" cy="563.70" r="1.6" fill="#A4A8B2"/><circle cx="853.34" cy="563.70" r="1.6" fill="#A4A8B2"/><circle cx="870.04" cy="563.70" r="1.6" fill="#A4A8B2"/><circle cx="886.73" cy="563.70" r="1.6" fill="#A4A8B2"/><circle cx="903.43" cy="563.70" r="1.6" fill="#A4A8B2"/><circle cx="920.13" cy="563.20" r="1.6" fill="#A4A8B2"/><circle cx="936.82" cy="563.20" r="1.6" fill="#A4A8B2"/><circle cx="953.52" cy="563.20" r="1.6" fill="#A4A8B2"/><circle cx="970.21" cy="563.20" r="1.6" fill="#A4A8B2"/><circle cx="986.91" cy="563.20" r="1.6" fill="#A4A8B2"/><circle cx="1003.61" cy="563.20" r="1.6" fill="#A4A8B2"/><circle cx="1020.30" cy="563.20" r="1.6" fill="#A4A8B2"/><circle cx="1037.00" cy="563.20" r="1.6" fill="#A4A8B2"/><polyline points="586.20,568.60 602.90,568.60 619.59,568.60 636.29,568.60 652.99,568.60 669.68,568.60 686.38,568.60 703.07,568.60 719.77,568.60 736.47,568.60 753.16,568.60 769.86,568.60 786.56,568.60 803.25,568.60 819.95,568.60 836.64,568.60 853.34,568.60 870.04,568.60 886.73,568.60 903.43,568.60 920.13,568.60 936.82,568.60 953.52,568.60 970.21,568.60 986.91,568.60 1003.61,568.60 1020.30,568.60 1037.00,568.60" fill="none" stroke="#E6CF6A" stroke-width="1.4"/><circle cx="586.20" cy="568.60" r="1.6" fill="#C9B24A"/><circle cx="602.90" cy="568.60" r="1.6" fill="#C9B24A"/><circle cx="619.59" cy="568.60" r="1.6" fill="#C9B24A"/><circle cx="636.29" cy="568.60" r="1.6" fill="#C9B24A"/><circle cx="652.99" cy="568.60" r="1.6" fill="#C9B24A"/><circle cx="669.68" cy="568.60" r="1.6" fill="#C9B24A"/><circle cx="686.38" cy="568.60" r="1.6" fill="#C9B24A"/><circle cx="703.07" cy="568.60" r="1.6" fill="#C9B24A"/><circle cx="719.77" cy="568.60" r="1.6" fill="#C9B24A"/><circle cx="736.47" cy="568.60" r="1.6" fill="#C9B24A"/><circle cx="753.16" cy="568.60" r="1.6" fill="#C9B24A"/><circle cx="769.86" cy="568.60" r="1.6" fill="#C9B24A"/><circle cx="786.56" cy="568.60" r="1.6" fill="#C9B24A"/><circle cx="803.25" cy="568.60" r="1.6" fill="#C9B24A"/><circle cx="819.95" cy="568.60" r="1.6" fill="#C9B24A"/><circle cx="836.64" cy="568.60" r="1.6" fill="#C9B24A"/><circle cx="853.34" cy="568.60" r="1.6" fill="#C9B24A"/><circle cx="870.04" cy="568.60" r="1.6" fill="#C9B24A"/><circle cx="886.73" cy="568.60" r="1.6" fill="#C9B24A"/><circle cx="903.43" cy="568.60" r="1.6" fill="#C9B24A"/><circle cx="920.13" cy="568.60" r="1.6" fill="#C9B24A"/><circle cx="936.82" cy="568.60" r="1.6" fill="#C9B24A"/><circle cx="953.52" cy="568.60" r="1.6" fill="#C9B24A"/><circle cx="970.21" cy="568.60" r="1.6" fill="#C9B24A"/><circle cx="986.91" cy="568.60" r="1.6" fill="#C9B24A"/><circle cx="1003.61" cy="568.60" r="1.6" fill="#C9B24A"/><circle cx="1020.30" cy="568.60" r="1.6" fill="#C9B24A"/><circle cx="1037.00" cy="568.60" r="1.6" fill="#C9B24A"/><line x1="586.2" y1="432.9" x2="1037" y2="432.9" stroke="#3F73B8" stroke-width="1.6" stroke-dasharray="1.6,4"/><rect x="1073.6" y="128.10000000000002" width="5.4" height="5.4" fill="#A6BDD8"/><text x="1082.7" y="133.4" font-size="7.3" fill="#333">Uncovered~Other</text><rect x="1148" y="128.10000000000002" width="5.4" height="5.4" fill="#2F6DA8"/><text x="1157" y="133.4" font-size="7.3" fill="#333">Uncovered~core</text><rect x="1073.6" y="140.70000000000002" width="5.4" height="5.4" fill="#D4D6D9"/><text x="1082.7" y="146.0" font-size="7.3" fill="#333">Unknown~Other</text><rect x="1143" y="140.70000000000002" width="5.4" height="5.4" fill="#9EA3A8"/><text x="1152" y="146.0" font-size="7.3" fill="#333">Unknown~core</text><rect x="1208" y="140.70000000000002" width="5.4" height="5.4" fill="#F6EDB8"/><text x="1217" y="146.0" font-size="7.3" fill="#333">x</text><rect x="1074" y="153.0" width="5.4" height="5.4" fill="#A5CF7F"/><text x="1082" y="158.29999999999998" font-size="7.3" fill="#333">OK~core</text><rect x="1122" y="153.0" width="5.4" height="5.4" fill="#5E9E3C"/><text x="1131" y="158.29999999999998" font-size="7.3" fill="#999">OK~Android</text><path d="M1209,168.4 H1086.8 V329.4 H1209" fill="none" stroke="#444" stroke-width="0.8"/><line x1="1082.8" y1="329.40" x2="1086.8" y2="329.40" stroke="#555" stroke-width="0.6"/><text x="1082" y="331.40" font-size="5.4" fill="#444" text-anchor="end">0</text><line x1="1084.3" y1="321.35" x2="1086.8" y2="321.35" stroke="#555" stroke-width="0.6"/><line x1="1082.8" y1="313.30" x2="1086.8" y2="313.30" stroke="#555" stroke-width="0.6"/><text x="1082" y="315.30" font-size="5.4" fill="#444" text-anchor="end">20</text><line x1="1084.3" y1="305.25" x2="1086.8" y2="305.25" stroke="#555" stroke-width="0.6"/><line x1="1082.8" y1="297.20" x2="1086.8" y2="297.20" stroke="#555" stroke-width="0.6"/><text x="1082" y="299.20" font-size="5.4" fill="#444" text-anchor="end">40</text><line x1="1084.3" y1="289.15" x2="1086.8" y2="289.15" stroke="#555" stroke-width="0.6"/><line x1="1082.8" y1="281.10" x2="1086.8" y2="281.10" stroke="#555" stroke-width="0.6"/><text x="1082" y="283.10" font-size="5.4" fill="#444" text-anchor="end">60</text><line x1="1084.3" y1="273.05" x2="1086.8" y2="273.05" stroke="#555" stroke-width="0.6"/><line x1="1082.8" y1="265.00" x2="1086.8" y2="265.00" stroke="#555" stroke-width="0.6"/><text x="1082" y="267.00" font-size="5.4" fill="#444" text-anchor="end">80</text><line x1="1084.3" y1="256.95" x2="1086.8" y2="256.95" stroke="#555" stroke-width="0.6"/><line x1="1082.8" y1="248.90" x2="1086.8" y2="248.90" stroke="#555" stroke-width="0.6"/><text x="1082" y="250.90" font-size="5.4" fill="#444" text-anchor="end">100</text><line x1="1084.3" y1="240.85" x2="1086.8" y2="240.85" stroke="#555" stroke-width="0.6"/><line x1="1082.8" y1="232.80" x2="1086.8" y2="232.80" stroke="#555" stroke-width="0.6"/><text x="1082" y="234.80" font-size="5.4" fill="#444" text-anchor="end">120</text><line x1="1084.3" y1="224.75" x2="1086.8" y2="224.75" stroke="#555" stroke-width="0.6"/><line x1="1082.8" y1="216.70" x2="1086.8" y2="216.70" stroke="#555" stroke-width="0.6"/><text x="1082" y="218.70" font-size="5.4" fill="#444" text-anchor="end">140</text><line x1="1084.3" y1="208.65" x2="1086.8" y2="208.65" stroke="#555" stroke-width="0.6"/><line x1="1082.8" y1="200.60" x2="1086.8" y2="200.60" stroke="#555" stroke-width="0.6"/><text x="1082" y="202.60" font-size="5.4" fill="#444" text-anchor="end">160</text><line x1="1084.3" y1="192.55" x2="1086.8" y2="192.55" stroke="#555" stroke-width="0.6"/><line x1="1082.8" y1="184.50" x2="1086.8" y2="184.50" stroke="#555" stroke-width="0.6"/><text x="1082" y="186.50" font-size="5.4" fill="#444" text-anchor="end">180</text><line x1="1084.3" y1="176.45" x2="1086.8" y2="176.45" stroke="#555" stroke-width="0.6"/><line x1="1082.8" y1="168.40" x2="1086.8" y2="168.40" stroke="#555" stroke-width="0.6"/><text x="1082" y="170.40" font-size="5.4" fill="#444" text-anchor="end">200</text><rect x="1090" y="324.57" width="40.00" height="4.83" fill="#8CC063"/><rect x="1090" y="265.00" width="40.00" height="59.57" fill="#D3E5BF"/><rect x="1090" y="262.18" width="40.00" height="2.82" fill="#D24F43"/><rect x="1090" y="224.75" width="40.00" height="37.43" fill="#EDB8B3"/><rect x="1090" y="186.11" width="40.00" height="38.64" fill="#F7EDBA"/><rect x="1090" y="178.06" width="40.00" height="8.05" fill="#A8BFD9"/><line x1="1110.0" y1="329.4" x2="1110.0" y2="333" stroke="#555" stroke-width="0.6"/><text x="1113.0" y="337" font-size="5.6" fill="#444" text-anchor="end" transform="rotate(-60 1113.0 337)">2018-08-19</text><rect x="1135" y="324.57" width="40.60" height="4.83" fill="#8CC063"/><rect x="1135" y="265.00" width="40.60" height="59.57" fill="#D3E5BF"/><rect x="1135" y="262.18" width="40.60" height="2.82" fill="#D24F43"/><rect x="1135" y="224.75" width="40.60" height="37.43" fill="#EDB8B3"/><rect x="1135" y="186.11" width="40.60" height="38.64" fill="#F7EDBA"/><rect x="1135" y="176.45" width="40.60" height="9.66" fill="#A8BFD9"/><line x1="1155.3" y1="329.4" x2="1155.3" y2="333" stroke="#555" stroke-width="0.6"/><text x="1158.3" y="337" font-size="5.6" fill="#444" text-anchor="end" transform="rotate(-60 1158.3 337)">2018-08-20</text><rect x="1180.6" y="324.57" width="40.40" height="4.83" fill="#8CC063"/><rect x="1180.6" y="265.00" width="40.40" height="59.57" fill="#D3E5BF"/><rect x="1180.6" y="262.18" width="40.40" height="2.82" fill="#D24F43"/><rect x="1180.6" y="224.75" width="40.40" height="37.43" fill="#EDB8B3"/><rect x="1180.6" y="186.11" width="40.40" height="38.64" fill="#F7EDBA"/><rect x="1180.6" y="176.45" width="40.40" height="9.66" fill="#A8BFD9"/><line x1="1200.8" y1="329.4" x2="1200.8" y2="333" stroke="#555" stroke-width="0.6"/><text x="1203.8" y="337" font-size="5.6" fill="#444" text-anchor="end" transform="rotate(-60 1203.8 337)">2018-08-21</text><path d="M1204.00,419.80 A124,124 0 0 1 1266.00,651.19 L1227.75,584.94 A47.5,47.5 0 0 0 1204.00,496.30 Z" fill="#C5DDA5" stroke="#fff" stroke-width="1"/><path d="M1266.00,651.19 A124,124 0 0 1 1080.30,535.15 L1156.62,540.49 A47.5,47.5 0 0 0 1227.75,584.94 Z" fill="#A0C0E0" stroke="#fff" stroke-width="1"/><path d="M1080.30,535.15 A124,124 0 0 1 1191.25,420.46 L1199.12,496.55 A47.5,47.5 0 0 0 1156.62,540.49 Z" fill="#DD726A" stroke="#fff" stroke-width="1"/><path d="M1191.25,420.46 A124,124 0 0 1 1196.00,420.06 L1200.93,496.40 A47.5,47.5 0 0 0 1199.12,496.55 Z" fill="#F3E19A" stroke="#fff" stroke-width="1"/><path d="M1196.00,420.06 A124,124 0 0 1 1200.11,419.86 L1202.51,496.32 A47.5,47.5 0 0 0 1200.93,496.40 Z" fill="#B8B0D0" stroke="#fff" stroke-width="1"/><path d="M1200.11,419.86 A124,124 0 0 1 1204.00,419.80 L1204.00,496.30 A47.5,47.5 0 0 0 1202.51,496.32 Z" fill="#FFFFFF" stroke="#fff" stroke-width="1"/><text x="1175.3" y="545.6" font-size="30" fill="#BC3B30">22%</text><text x="1195" y="557.9" font-size="7.6" font-weight="bold" fill="#333">FAIL</text></svg>
</div></div>
</body></html>
